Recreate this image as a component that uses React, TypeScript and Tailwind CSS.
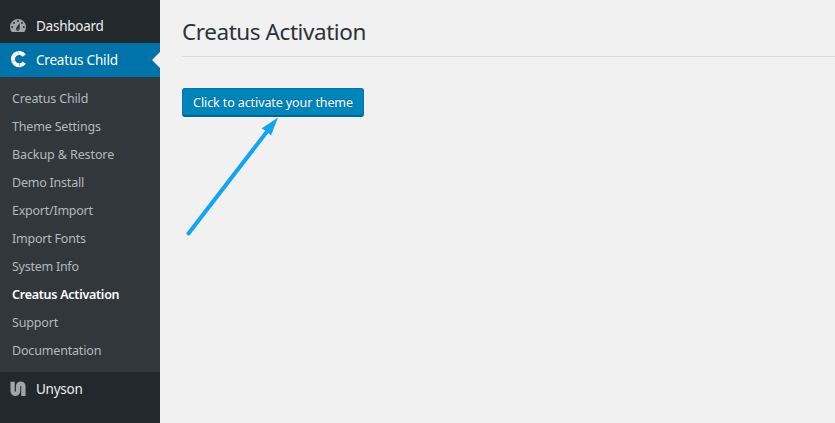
const submenu = [
  { label: 'Creatus Child', spacing: 'tracking-[-0.15px]' },
  { label: 'Theme Settings', spacing: 'tracking-[-0.18px]' },
  { label: 'Backup & Restore', spacing: 'tracking-[-0.1px]' },
  { label: 'Demo Install', spacing: 'tracking-[-0.22px]' },
  { label: 'Export/Import', spacing: 'tracking-[-0.25px]' },
  { label: 'Import Fonts', spacing: 'tracking-[-0.22px]' },
  { label: 'System Info', spacing: 'tracking-[-0.26px]' },
  { label: 'Creatus Activation', spacing: 'tracking-[-0.26px]', current: true },
  { label: 'Support', spacing: 'tracking-[-0.15px]' },
  { label: 'Documentation', spacing: 'tracking-[-0.17px]' },
];

function DashboardIcon() {
  return (
    <svg viewBox="0 0 20 20" className="size-5">
      <path d="M3.76 16h12.48A8 8 0 1 0 3.76 16z" fill="#a0a5aa" />
      <g fill="#23282d">
        <circle cx="10" cy="5" r=".9" />
        <circle cx="6" cy="7" r=".9" />
        <circle cx="14" cy="7" r=".9" />
        <circle cx="4.2" cy="11" r=".9" />
        <circle cx="15.8" cy="11" r=".9" />
        <path d="M8.63 11.55L11.6 7v6a1.8 1.8 0 1 1-2.97-1.45z" />
      </g>
      <circle cx="9.9" cy="13.1" r=".7" fill="#a0a5aa" />
    </svg>
  );
}

function CreatusIcon() {
  return (
    <svg viewBox="0 0 20 20" className="size-5 fill-none">
      <path d="M16.2 5.6A6.2 6.2 0 1 0 16.2 12.6" stroke="#fff" strokeWidth="4" />
      <path d="M9.2 1.2l1.9 3.6M3 11.3l3.8-.8M11.8 17l-.6-3.8" stroke="#0073aa" strokeWidth=".4" />
    </svg>
  );
}

function UnysonIcon() {
  return (
    <svg viewBox="0 0 20 20" className="size-5 fill-none">
      <path
        d="M4.6 2.8v9.2c0 3.9 5.5 3.9 5.5 0V7c0-3 5.3-3 5.3 0v9.9"
        stroke="#a0a5aa"
        strokeWidth="4.3"
      />
    </svg>
  );
}

export default function App() {
  return (
    <div className="flex h-[423px] w-[835px] overflow-hidden bg-[#f1f1f1] font-['Noto_Sans',sans-serif]">
      <nav className="w-40 shrink-0 bg-[#23282d] pt-[9px] text-[13.5px] text-[#eee]">
        <a className="flex h-[34px] items-center gap-2 pl-2">
          <DashboardIcon />
          <span className="tracking-[-0.25px]">Dashboard</span>
        </a>
        <a className="relative flex h-[34px] items-center gap-2 bg-[#0073aa] pl-2 text-white">
          <CreatusIcon />
          <span className="tracking-[-0.2px]">Creatus Child</span>
          <span className="absolute right-0 top-[9px] border-y-8 border-r-8 border-y-transparent border-r-[#f1f1f1]" />
        </a>
        <ul className="bg-[#32373c] pb-[7px] pt-2 text-[12.5px] text-[#b4b9be]">
          {submenu.map((item) => (
            <li key={item.label} className="flex h-7 items-center pl-3">
              <span className={`${item.spacing} ${item.current ? 'font-semibold text-white' : ''}`}>{item.label}</span>
            </li>
          ))}
        </ul>
        <a className="flex h-[34px] items-center gap-2 pl-2">
          <UnysonIcon />
          <span className="tracking-[-0.25px]">Unyson</span>
        </a>
      </nav>
      <main className="relative min-w-0 flex-1 pl-[22px] pt-[14px]">
        <h1 className="h-[43px] border-b border-[#dcdcdc] text-[22.5px] leading-9 tracking-[-0.43px] text-[#2d3237]">
          <span>Creatus Activation</span>
        </h1>
        <button className="mt-[31px] flex h-[29px] w-[182px] items-center justify-center whitespace-nowrap rounded-[3px] border border-[#0073aa] border-b-[#006799] bg-[#0085ba] pt-px text-[12.5px] tracking-[-0.1px] text-white shadow-[inset_0_-1px_0_#006799] [text-shadow:0_-1px_1px_#006799]">
          <span>Click to activate your theme</span>
        </button>
        <svg className="absolute left-[20px] top-[110px] h-[135px] w-[105px]" viewBox="180 110 105 135">
          <path d="M188.5 233.5L269 129" stroke="#12a5f4" strokeWidth="4" strokeLinecap="round" />
          <path d="M278 117.5L261.5 128.5L266.5 131.2L271 135.5Z" fill="#12a5f4" />
        </svg>
      </main>
    </div>
  );
}
